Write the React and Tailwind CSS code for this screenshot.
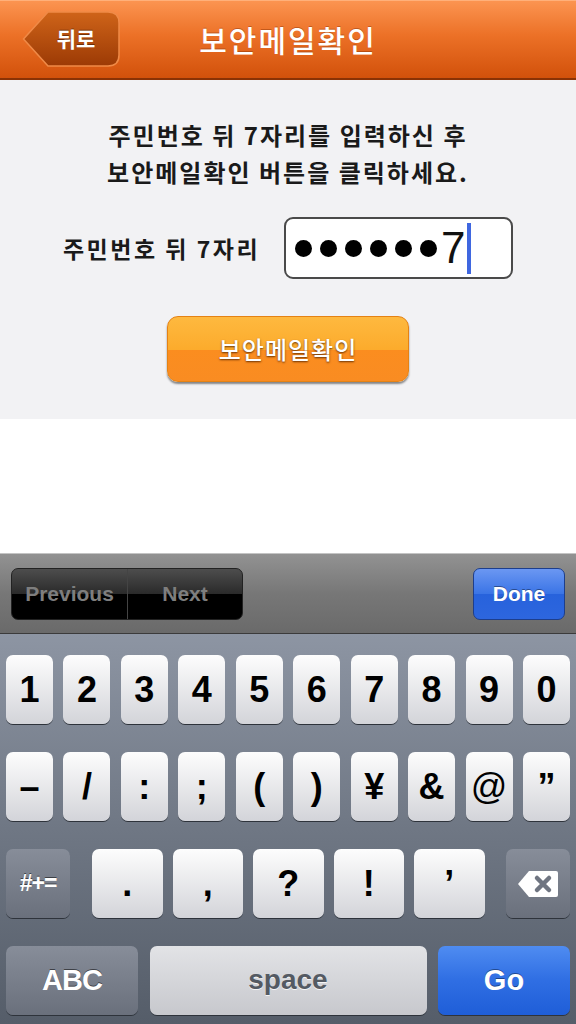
const numRow = ["1", "2", "3", "4", "5", "6", "7", "8", "9", "0"];
const symRow = ["–", "/", ":", ";", "(", ")", "¥", "&", "@", "”"];
const puncRow = [".", ",", "?", "!", "’"];

const kr = "font-['Noto_Sans_CJK_KR','Noto_Sans',sans-serif]";
const ui = "font-['Liberation_Sans','Arial',sans-serif]";

function Key({ children, className = "" }) {
  return (
    <div
      className={`flex h-[69px] items-center justify-center rounded-[7px] bg-[linear-gradient(#fdfdfd,#d3d4d9)] text-[36px] leading-none font-bold text-black shadow-[0_1px_0_#2e333b] ${className}`}
    >
      {children}
    </div>
  );
}

function GrayKey({ children, className = "" }) {
  return (
    <div
      className={`flex h-[69px] items-center justify-center rounded-[7px] bg-[linear-gradient(#878d99,#6a707c)] text-white shadow-[0_1px_0_#2e333b] [text-shadow:0_-1px_0_rgba(0,0,0,0.5)] ${className}`}
    >
      {children}
    </div>
  );
}

function BackButton() {
  return (
    <div className="relative h-[56px] w-[98px]">
      <svg width="98" height="56" viewBox="0 0 98 56" className="absolute inset-0">
        <defs>
          <linearGradient id="bk" x1="0" y1="0" x2="0" y2="1">
            <stop offset="0" stopColor="#cf6419" />
            <stop offset="1" stopColor="#9c3a05" />
          </linearGradient>
        </defs>
        <path
          d="M26 1 H86 Q97 1 97 12 V44 Q97 55 86 55 H26 L1.5 28 Z"
          fill="url(#bk)"
          stroke="#f08a47"
          strokeWidth="1.5"
        />
      </svg>
      <span
        className={`absolute inset-0 flex items-center justify-center pl-[10px] text-[21px] font-bold text-white [text-shadow:0_-1px_0_rgba(0,0,0,0.4)] ${kr}`}
      >
        뒤로
      </span>
    </div>
  );
}

function DeleteIcon() {
  return (
    <svg width="42" height="28" viewBox="0 0 42 28">
      <path d="M12 1 H39 Q41 1 41 3 V25 Q41 27 39 27 H12 L1 14 Z" fill="#fff" />
      <path
        d="M20 8 L32 20 M32 8 L20 20"
        stroke="#6f7581"
        strokeWidth="4.5"
        strokeLinecap="round"
      />
    </svg>
  );
}

export default function App() {
  return (
    <div className="flex h-[1024px] w-[576px] flex-col overflow-hidden bg-white">
      {/* header */}
      <div className="grid h-[80px] shrink-0 grid-cols-[1fr_auto_1fr] items-center border-b-2 border-[#8a3205] bg-[linear-gradient(#fc9552,#ec7127_45%,#d2510b)] shadow-[inset_0_1px_0_#ffb07a]">
        <div className="pl-[22px]">
          <BackButton />
        </div>
        <h1 className={`text-[30px] font-medium tracking-[2px] text-white [text-shadow:0_-1px_0_rgba(120,40,0,0.4)] ${kr}`}>
          보안메일확인
        </h1>
        <div />
      </div>

      {/* form */}
      <div className={`flex h-[339px] shrink-0 flex-col items-center bg-[#f2f2f4] pt-[36px] ${kr}`}>
        <p className="text-center text-[24px] leading-[37px] font-bold tracking-[2px] text-[#1a1a1a]">
          주민번호 뒤 7자리를 입력하신 후
          <br />
          보안메일확인 버튼을 클릭하세요.
        </p>
        <div className="mt-[27px] flex items-center gap-[24px]">
          <span className="text-[23px] font-bold tracking-[2.5px] text-[#1a1a1a]">주민번호 뒤 7자리</span>
          <div className="flex h-[62px] w-[229px] items-center rounded-[9px] border-2 border-[#4a4a4a] bg-white pl-[9px]">
            <div className="flex gap-[8px]">
              {[0, 1, 2, 3, 4, 5].map((i) => (
                <span key={i} className="h-[17px] w-[17px] rounded-full bg-black" />
              ))}
            </div>
            <span className={`ml-[4px] text-[44px] leading-none font-normal text-[#111] ${ui}`}>7</span>
            <span className="ml-[1px] h-[51px] w-[4px] bg-[#3f67e0]" />
          </div>
        </div>
        <div className="mt-[37px] flex h-[66px] w-[242px] items-center justify-center rounded-[11px] border border-[#e58214] bg-[linear-gradient(#feb93f,#fcab2c_51%,#fb8d1f_51%,#f98c22)] shadow-[0_2px_2px_rgba(0,0,0,0.45)]">
          <span className="text-[24px] font-medium tracking-[1px] text-white [text-shadow:0_1px_2px_rgba(90,40,0,0.9)]">
            보안메일확인
          </span>
        </div>
      </div>

      {/* blank */}
      <div className="h-[134px] shrink-0 bg-white" />

      {/* toolbar */}
      <div className={`flex h-[81px] shrink-0 items-center justify-between border-t border-b border-t-[#c4c4c4] border-b-[#3b3b3b] bg-[linear-gradient(#929292,#777_50%,#6a6a6a)] px-[11px] ${ui}`}>
        <div className="flex h-[52px] w-[232px] overflow-hidden rounded-[7px] border border-[#222] bg-[linear-gradient(#4d4d4d,#2a2a2a_50%,#000_50%,#000)] text-[21px] font-bold text-[#7e7e7e]">
          <div className="flex w-[116px] items-center justify-center border-r border-[#444]">Previous</div>
          <div className="flex flex-1 items-center justify-center">Next</div>
        </div>
        <div className="flex h-[52px] w-[92px] items-center justify-center rounded-[7px] border border-[#1d3e8c] bg-[linear-gradient(#6b97f2,#3a74e6_50%,#2762dc_50%,#2d66de)] text-[21px] font-bold text-white [text-shadow:0_-1px_0_rgba(0,0,0,0.4)]">
          Done
        </div>
      </div>

      {/* keyboard */}
      <div className={`flex flex-1 flex-col gap-[28px] bg-[linear-gradient(#8d95a3,#6f7784_50%,#555d69)] px-[6px] pt-[21px] ${ui}`}>
        <div className="grid grid-cols-10 gap-x-[10.5px]">
          {numRow.map((k) => (
            <Key key={k}>{k}</Key>
          ))}
        </div>
        <div className="grid grid-cols-10 gap-x-[10.5px]">
          {symRow.map((k) => (
            <Key key={k} className={k === "@" ? "font-normal" : ""}>
              {k}
            </Key>
          ))}
        </div>
        <div className="flex">
          <GrayKey className="w-[64px] text-[23px] font-bold tracking-[-1px]">#+=</GrayKey>
          <div className="ml-[22px] flex gap-[10px]">
            {puncRow.map((k) => (
              <Key key={k} className="w-[70.5px]">
                {k}
              </Key>
            ))}
          </div>
          <GrayKey className="ml-auto w-[64px]">
            <DeleteIcon />
          </GrayKey>
        </div>
        <div className="flex gap-[11.5px]">
          <GrayKey className="w-[132px] text-[29px] font-bold tracking-[-1px]">ABC</GrayKey>
          <div className="flex h-[69px] w-[277px] items-center justify-center rounded-[7px] bg-[linear-gradient(#e2e3e6,#c7c8cd)] pb-[2px] text-[28px] font-bold text-[#545a63] shadow-[0_1px_0_#2e333b] [text-shadow:0_1px_0_rgba(255,255,255,0.8)]">
            space
          </div>
          <div className="flex h-[69px] flex-1 items-center justify-center rounded-[7px] bg-[linear-gradient(#4f8cf1,#2f6ee3_50%,#1f5ed8)] text-[29px] font-bold text-white shadow-[0_1px_0_#2e333b] [text-shadow:0_-1px_0_rgba(0,0,0,0.4)]">
            Go
          </div>
        </div>
      </div>
    </div>
  );
}
